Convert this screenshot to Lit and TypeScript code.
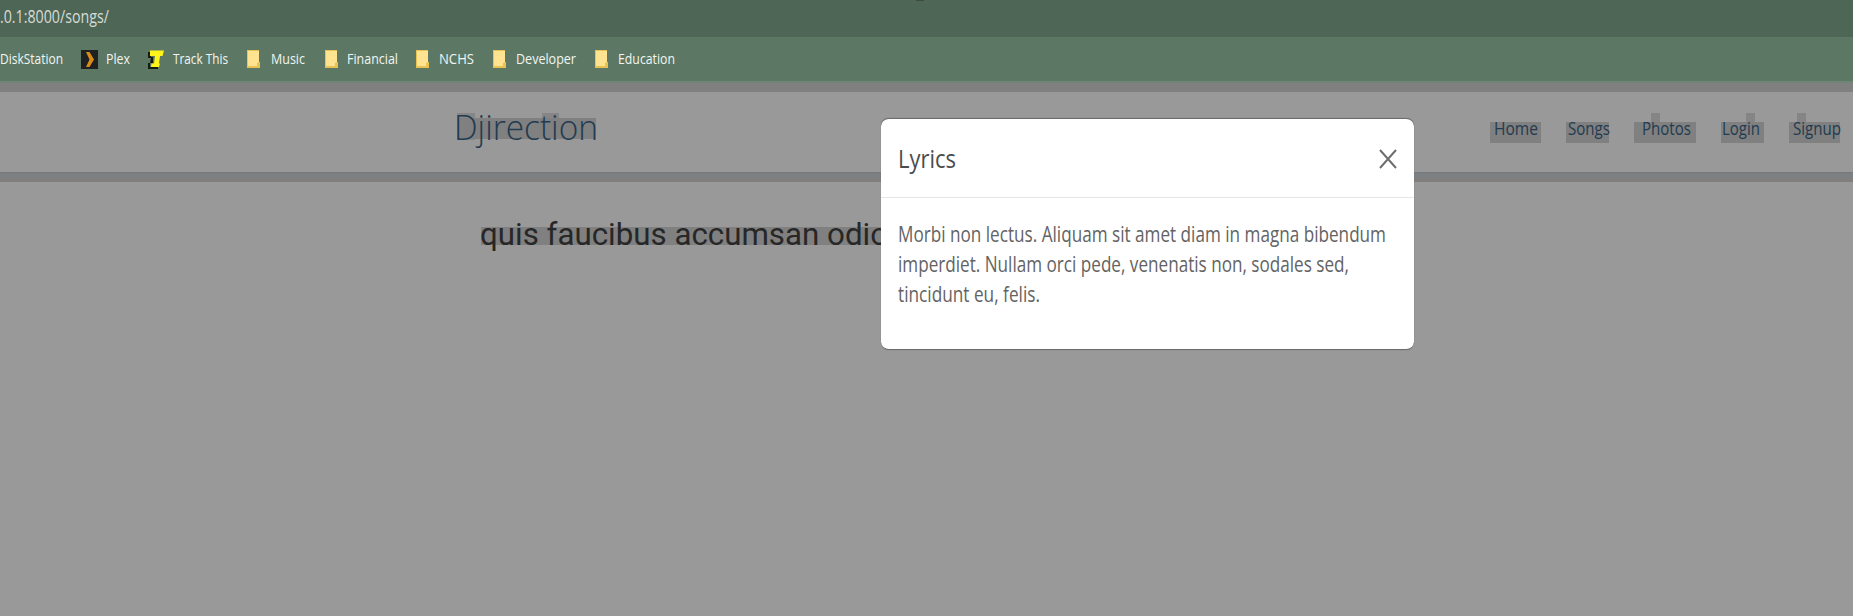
import { LitElement, html, css, nothing } from "lit";
import { customElement, property } from "lit/decorators.js";
import { styleMap } from "lit/directives/style-map.js";

/** One line of real text, condensed to an exact width. */
@customElement("fit-text")
class FitText extends LitElement {
  @property() text = "";
  @property({ type: Number }) width = 0;
  @property({ type: Number }) height = 20;
  @property({ type: Number }) baseline = 15;

  static styles = css`
    :host { display: block; flex: none; }
    svg { display: block; overflow: visible; }
    text { fill: currentColor; }
  `;

  render() {
    return html`<svg width=${this.width} height=${this.height}>
      <text x="0" y=${this.baseline} textLength=${this.width} lengthAdjust="spacingAndGlyphs">${this.text}</text>
    </svg>`;
  }
}

type Bookmark = { icon?: string; gap: number; label: string; width: number; pad: number };

const bookmarks: Bookmark[] = [
  { gap: 0, label: "DiskStation", width: 63, pad: 0 },
  { icon: "plex", gap: 18, label: "Plex", width: 24, pad: 8 },
  { icon: "track", gap: 17, label: "Track This", width: 55, pad: 8 },
  { icon: "folder", gap: 19, label: "Music", width: 34, pad: 11 },
  { icon: "folder", gap: 20, label: "Financial", width: 51, pad: 9 },
  { icon: "folder", gap: 18, label: "NCHS", width: 35, pad: 10 },
  { icon: "folder", gap: 19, label: "Developer", width: 60, pad: 10 },
  { icon: "folder", gap: 19, label: "Education", width: 57, pad: 10 },
];

const links = [
  { label: "Home", width: 44, before: 3.5, after: 3.5, gap: 0, bump: 0 },
  { label: "Songs", width: 42, before: 2, after: -1, gap: 25, bump: 0 },
  { label: "Photos", width: 49, before: 8, after: 5, gap: 25, bump: 17 },
  { label: "Login", width: 38, before: 1, after: 4, gap: 25, bump: 25 },
  { label: "Signup", width: 48, before: 4, after: -1, gap: 25, bump: 8 },
];

const lyrics = [
  { text: "Morbi non lectus. Aliquam sit amet diam in magna bibendum", width: 488 },
  { text: "imperdiet. Nullam orci pede, venenatis non, sodales sed,", width: 451 },
  { text: "tincidunt eu, felis.", width: 142 },
];

@customElement("app-root")
class AppRoot extends LitElement {
  static styles = css`
    :host {
      display: block;
      position: relative;
      height: 616px;
      overflow: hidden;
      background: #999;
      font-family: "Open Sans", "Noto Sans", sans-serif;
    }
    .address {
      height: 37px;
      background: linear-gradient(#3f4a42, #3f4a42) 916px 0 / 8px 1px no-repeat, #4e6655;
      color: #d5dcd7;
      font-size: 18.5px;
    }
    .bookmarks {
      display: flex;
      height: 44px;
      align-items: center;
      background: #5c7864;
      color: #f1f5f2;
      font-size: 14.5px;
      -webkit-text-stroke: 0.35px #f1f5f2;
    }
    .icon { display: block; flex: none; }
    .shade { height: 11px; background: linear-gradient(#6f8576 0 2px, #808080 2px); }
    .navbar {
      display: flex;
      height: 80px;
      box-sizing: border-box;
      padding: 0 13px 0 454px;
      justify-content: space-between;
      color: #223b50;
    }
    .brand { padding-top: 21px; font-size: 34.5px; font-weight: 300; }
    .brand fit-text {
      background: linear-gradient(#808080, #808080) 3px 5px / 139px 21px no-repeat,
        linear-gradient(#868686, #868686) 3px 0 / 18px 27px no-repeat,
        linear-gradient(#868686, #868686) 88px 0 / 17px 6px no-repeat;
      -webkit-text-stroke: 0.6px #223b50;
    }
    .links { display: flex; padding-top: 30px; font-size: 17.5px; }
    .link { position: relative; height: 21px; background: #808080; }
    .bump { position: absolute; top: -9px; width: 9px; height: 9px; background: #858585; }
    .rule { height: 10px; background: linear-gradient(#77797c 0 1px, #7c8083 1px 6px, #807f7e 6px); }
    .song { padding: 36px 0 0 480px; color: #272727; font-family: Roboto, sans-serif; font-size: 32px; }
    .song fit-text { width: 410px; background: linear-gradient(#808080, #808080) 1px 9px / 100% 18px no-repeat; }
    .modal {
      position: absolute;
      left: 881px;
      top: 118px;
      width: 533px;
      height: 232px;
      box-sizing: border-box;
      border: solid #6c6c6c;
      border-width: 1px 0 1px 0;
      border-radius: 8px;
      box-shadow: 0 0 1px #666;
      background: #fff;
    }
    .head {
      display: flex;
      justify-content: space-between;
      height: 79px;
      box-sizing: border-box;
      padding: 24px 17px 0 17px;
      border-bottom: 1px solid #e6e6e6;
      color: #4c4c4c;
      font-size: 26px;
    }
    .close { margin-top: 6px; }
    .body { padding: 22.5px 0 0 17px; color: #636363; font-size: 21px; }
  `;

  private icon(name?: string) {
    if (!name) return nothing;
    if (name === "folder")
      return html`<svg class="icon" width="13" height="18" viewBox="0 0 13 18">
        <path d="M0 0H12V12H13V18H0Z" fill="#e8c252" /><path d="M1 1H12V12L10 13V16H1Z" fill="#ffe391" />
      </svg>`;
    if (name === "plex")
      return html`<svg class="icon" width="17" height="19" viewBox="0 0 17 19">
        <path d="M0 0H17V19H0Z" fill="#1f2022" /><path d="M5 2H8.5L13 9.5L8.5 17H5L8.5 9.5Z" fill="#d98b16" />
      </svg>`;
    return html`<svg class="icon" width="17" height="19" viewBox="0 0 17 19">
      <path d="M1 2H4V7H6V13H3V17H11V19H1V13H3L4 8H1Z" fill="#151a12" />
      <path d="M3 0.5H17L15.5 6H13L12 13.5H13L12 17H4L4.5 13.5H7L8 6H3Z" fill="#fff51a" />
    </svg>`;
  }

  render() {
    return html`
      <div class="address"><fit-text text=".0.1:8000/songs/" width="109" height="37" baseline="22.5"></fit-text></div>
      <div class="bookmarks">
        ${bookmarks.map(
          (b) => html`<span style=${styleMap({ width: `${b.gap}px`, flex: "none" })}></span>${this.icon(b.icon)}
            <span style=${styleMap({ width: `${b.pad + (b.icon === "track" ? 1 : 0)}px`, flex: "none" })}></span>
            <fit-text .text=${b.label} .width=${b.width} .height=${20} .baseline=${15}></fit-text>`
        )}
      </div>
      <div class="shade"></div>
      <nav class="navbar">
        <div class="brand"><fit-text text="Djirection" width="144" height="36" baseline="27"></fit-text></div>
        <div class="links">
          ${links.map(
            (l) => html`<div class="link" style=${styleMap({ marginLeft: `${l.gap}px`, paddingLeft: `${l.before}px`, width: `${l.width + l.after}px` })}>
              ${l.bump ? html`<i class="bump" style=${styleMap({ left: `${l.bump}px` })}></i>` : nothing}
              <fit-text .text=${l.label} .width=${l.width} .height=${20} .baseline=${13}></fit-text>
            </div>`
          )}
        </div>
      </nav>
      <div class="rule"></div>
      <div class="song"><fit-text text="quis faucibus accumsan odio" width="408" height="36" baseline="27"></fit-text></div>
      <section class="modal" role="dialog">
        <header class="head">
          <fit-text text="Lyrics" width="58" height="36" baseline="25"></fit-text>
          <svg class="close" width="18" height="20" viewBox="0 0 18 20">
            <path d="M1 1L17 19M17 1L1 19" fill="none" stroke="#6e6e6e" stroke-width="2" />
          </svg>
        </header>
        <div class="body">
          ${lyrics.map((l) => html`<fit-text .text=${l.text} .width=${l.width} .height=${30.3} .baseline=${21}></fit-text>`)}
        </div>
      </section>
    `;
  }
}
